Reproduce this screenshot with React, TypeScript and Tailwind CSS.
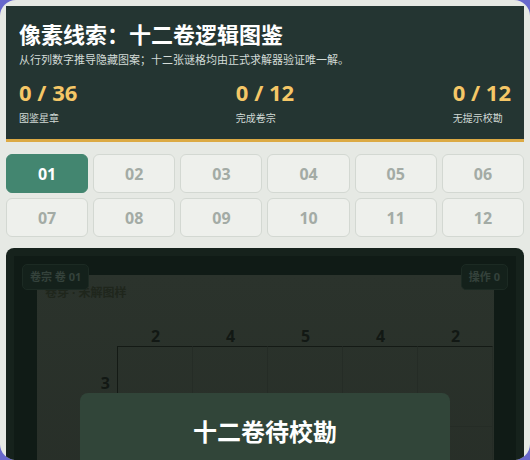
import { useState } from 'react'

const VOLUMES = ['01', '02', '03', '04', '05', '06', '07', '08', '09', '10', '11', '12']

const COL_CLUES = [2, 4, 5, 4, 2]
const ROW_CLUES = [3, 5, 5, 3, 1]

function Stat({ value, label }: { value: string; label: string }) {
  return (
    <div className="flex flex-col">
      <span className="text-[22px] font-bold leading-[28px] text-[#f5c767]">{value}</span>
      <span className="mt-[5px] text-[10px] leading-[14px] text-[#d0d9d5]">{label}</span>
    </div>
  )
}

export default function App() {
  const [active, setActive] = useState('01')

  return (
    <div className="min-h-screen bg-[#6868cc] font-['Noto_Sans','Noto_Sans_CJK_SC',sans-serif]">
      <div className="relative h-[460px] overflow-hidden rounded-[16px] bg-[#e6e9e4] p-[6px]">
        <header className="border-b-[3px] border-[#dcaa44] bg-[#243532] px-[13px] pb-[14px] pt-[14px]">
          <h1 className="text-[22px] font-bold leading-[28px] text-white">
            像素线索：十二卷逻辑图鉴
          </h1>
          <p className="mt-[4px] text-[11px] leading-[16px] text-[#d3dcd8]">
            从行列数字推导隐藏图案；十二张谜格均由正式求解器验证唯一解。
          </p>
          <div className="mt-[10px] flex justify-between">
            <Stat value="0 / 36" label="图鉴星章" />
            <Stat value="0 / 12" label="完成卷宗" />
            <Stat value="0 / 12" label="无提示校勘" />
          </div>
        </header>

        <div className="mt-[12px] grid grid-cols-6 gap-[5px]">
          {VOLUMES.map((v) => (
            <button
              key={v}
              type="button"
              onClick={() => setActive(v)}
              className={
                v === active
                  ? 'h-[39px] rounded-[6px] border border-[#438670] bg-[#438670] text-[16px] font-bold text-white'
                  : 'h-[39px] rounded-[6px] border border-[#d3d8d2] bg-[#eef0ec] text-[16px] font-bold text-[#a3aba5]'
              }
            >
              {v}
            </button>
          ))}
        </div>

        {/* board, dimmed while the finish dialog is open */}
        <div className="relative mt-[11px] rounded-[8px] bg-[#16221c] p-[8px]">
          <div className="bg-[#101b16] pb-[20px] pl-[23px] pr-[22px] pt-[19px]">
            <div className="bg-gradient-to-b from-[#2b332c] to-[#232923] pb-[20px] pl-[8px] pt-[10px]">
              <p className="text-[12px] font-bold leading-[16px] text-[#1f261c]">卷芽 · 未解图样</p>
              <div className="grid grid-cols-[73px_repeat(5,75px)]">
                <div className="h-[45px]" />
                {COL_CLUES.map((c, i) => (
                  <div
                    key={i}
                    className="flex h-[45px] items-end justify-center text-[16px] font-bold leading-[20px] text-[#121814]"
                  >
                    {c}
                  </div>
                ))}
                {ROW_CLUES.map((r, ri) => (
                  <div key={ri} className="contents">
                    <div className="flex h-[80px] items-start justify-end border-r border-[#141a15] pr-[7px] pt-[27px] text-[16px] font-bold leading-[20px] text-[#121814]">
                      {r}
                    </div>
                    {COL_CLUES.map((_, ci) => (
                      <div
                        key={ci}
                        className={
                          ri === 0
                            ? 'h-[80px] border-r border-t border-[#252c26] border-t-[#141a15]'
                            : 'h-[80px] border-r border-t border-[#252c26]'
                        }
                      />
                    ))}
                  </div>
                ))}
              </div>
            </div>
          </div>

          <span className="absolute left-[16px] top-[16px] rounded-[5px] border border-[#1c2a23] bg-[#14211b] px-[7px] py-[5px] text-[11px] font-bold leading-[14px] text-[#34423b]">
            卷宗 卷 01
          </span>
          <span className="absolute right-[16px] top-[16px] rounded-[5px] border border-[#1c2a23] bg-[#14211b] px-[7px] py-[5px] text-[11px] font-bold leading-[14px] text-[#34423b]">
            操作 0
          </span>

          <div className="absolute left-[74px] top-[145px] h-[160px] w-[370px] rounded-[8px] bg-[#314539] pt-[23px] text-center">
            <h2 className="text-[24px] font-bold leading-[32px] text-white">十二卷待校勘</h2>
          </div>
        </div>
      </div>
    </div>
  )
}
